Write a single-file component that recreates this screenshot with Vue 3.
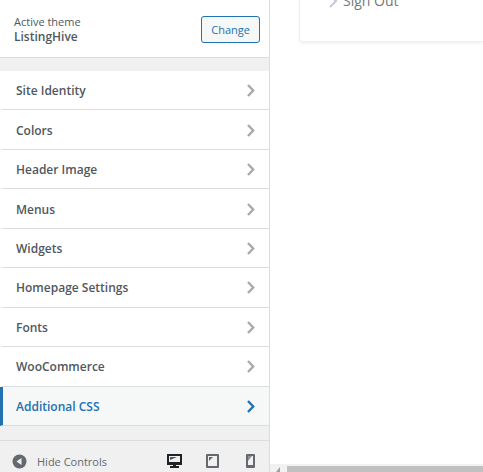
<template>
  <div class="customizer">
    <aside class="sidebar">
      <header class="theme-info">
        <div class="theme-title">
          <span>Active theme</span>
          <strong>ListingHive</strong>
        </div>
        <button type="button" class="change">Change</button>
      </header>

      <nav class="sections">
        <button
          v-for="section in sections"
          :key="section"
          type="button"
          :class="['section', { active: section === current }]"
          @click="current = section"
        >
          <span>{{ section }}</span>
          <svg class="chevron" width="8" height="13" viewBox="0 0 8 13">
            <path d="M1 1 L6.2 6.5 L1 12" />
          </svg>
        </button>
      </nav>

      <footer class="controls">
        <button type="button" class="collapse">
          <svg width="15" height="15" viewBox="0 0 15 15">
            <circle cx="7.5" cy="7.5" r="7" fill="#646970" />
            <path d="M9.5 4 V11 L4.5 7.5 Z" fill="#f0f0f0" />
          </svg>
          <span>Hide Controls</span>
        </button>
        <div class="devices">
          <button type="button" class="device" aria-label="Desktop">
            <svg width="16" height="15" viewBox="0 0 16 15">
              <path d="M1 0 H16 V11 H10 V12 H13 V14 H4 V12 H7 V11 H1 Z" fill="#1d2327" />
              <path d="M3 2 H14 V8 H3 Z" fill="#f0f0f0" />
              <path d="M4 3 H11 L4 6 Z" fill="#50565b" />
            </svg>
          </button>
          <button type="button" class="device" aria-label="Tablet">
            <svg width="16" height="15" viewBox="0 0 16 15">
              <rect x="2" y="0" width="13" height="14" rx="1" fill="#646970" />
              <path d="M4 2 H13 V12 H4 Z" fill="#f0f0f0" />
              <path d="M5 3 H9 L5 7 Z" fill="#646970" />
            </svg>
          </button>
          <button type="button" class="device" aria-label="Mobile">
            <svg width="16" height="15" viewBox="0 0 16 15">
              <rect x="4" y="0" width="9" height="14" rx="1" fill="#646970" />
              <path d="M6 2 H11 V11 H6 Z" fill="#f0f0f0" />
              <path d="M6 2 H10 L6 7 Z" fill="#8c9196" />
            </svg>
          </button>
        </div>
      </footer>
    </aside>

    <main class="preview">
      <div class="account-card">
        <a href="#" class="sign-out">
          <svg width="9" height="13" viewBox="0 0 9 13">
            <path d="M1 1 L7 6 L1 12" />
          </svg>
          <span>Sign Out</span>
        </a>
      </div>
      <div class="scrollbar">
        <svg width="17" height="6" viewBox="0 0 17 6">
          <path d="M10 1 V6 H6 Z" fill="#a0a0a0" />
        </svg>
        <div class="thumb"></div>
      </div>
    </main>
  </div>
</template>

<script setup>
import { ref } from 'vue'

const sections = [
  'Site Identity',
  'Colors',
  'Header Image',
  'Menus',
  'Widgets',
  'Homepage Settings',
  'Fonts',
  'WooCommerce',
  'Additional CSS'
]

const current = ref('Additional CSS')
</script>

<style>
body {
  margin: 0;
  background: #fff;
}
</style>

<style scoped>
.customizer {
  display: flex;
  height: 100vh;
  overflow: hidden;
  font-family: 'Open Sans', sans-serif;
  font-size: 11px;
  color: #50575e;
}
button {
  padding: 0;
  border: 0;
  background: none;
  font: inherit;
  color: inherit;
  cursor: pointer;
}
svg {
  display: block;
  flex: none;
}
.sidebar {
  box-sizing: border-box;
  flex: none;
  width: 270px;
  display: flex;
  flex-direction: column;
  background: #f0f0f0;
  border-right: 1px solid #dcdcde;
}
.theme-info {
  display: flex;
  align-items: center;
  justify-content: space-between;
  height: 57px;
  padding: 0 9px 0 14px;
  background: #fff;
  border-bottom: 1px solid #dcdcde;
}
.theme-title {
  display: flex;
  flex-direction: column;
  line-height: 15px;
}
.theme-title strong {
  font-size: 12px;
  font-weight: 600;
}
.change {
  height: 27px;
  padding: 0 9px;
  margin-top: 2px;
  border: 1px solid #2271b1;
  border-radius: 3px;
  background: #f6f7f7;
  color: #2271b1;
}
.sections {
  flex: 1;
  display: flex;
  flex-direction: column;
  margin: 13px 0 14px;
}
.section {
  flex: 1;
  display: flex;
  align-items: center;
  justify-content: space-between;
  padding: 1px 14px 0 13px;
  border-left: 3px solid #fff;
  border-bottom: 1px solid #dcdcde;
  background: #fff;
  font-size: 12px;
  font-weight: 600;
}
.section.active {
  border-left-color: #2271b1;
  background: #f6f7f7;
  color: #2271b1;
}
.chevron path {
  fill: none;
  stroke: #a7aaad;
  stroke-width: 2.4;
}
.active .chevron path {
  stroke: #2271b1;
}
.controls {
  display: flex;
  align-items: center;
  justify-content: space-between;
  box-sizing: border-box;
  height: 32px;
  padding: 10px 11px 0 12px;
  border-top: 1px solid #dcdcde;
}
.collapse {
  display: flex;
  align-items: center;
  gap: 10px;
  color: #646970;
}
.devices {
  display: flex;
  gap: 22px;
}
.preview {
  flex: 1;
  min-width: 0;
  display: flex;
  flex-direction: column;
  justify-content: space-between;
  background: #fff;
}
.account-card {
  display: flex;
  align-items: flex-end;
  box-sizing: border-box;
  height: 42px;
  margin-left: 29px;
  padding: 0 0 30px 29px;
  border: 1px solid #eeeff3;
  border-width: 0 0 1px 1px;
  border-radius: 0 0 0 3px;
  box-shadow: 0 2px 3px #f2f3f7;
}
.sign-out {
  display: flex;
  align-items: center;
  gap: 5px;
  font-size: 14px;
  line-height: 20px;
  color: #72777c;
  text-decoration: none;
}
.sign-out path {
  fill: none;
  stroke: #c3cad8;
  stroke-width: 2;
}
.scrollbar {
  display: flex;
  height: 8px;
  align-items: flex-end;
  background: #f1f1f1;
}
.thumb {
  flex: 1;
  height: 6px;
  background: #c1c1c1;
}
</style>
